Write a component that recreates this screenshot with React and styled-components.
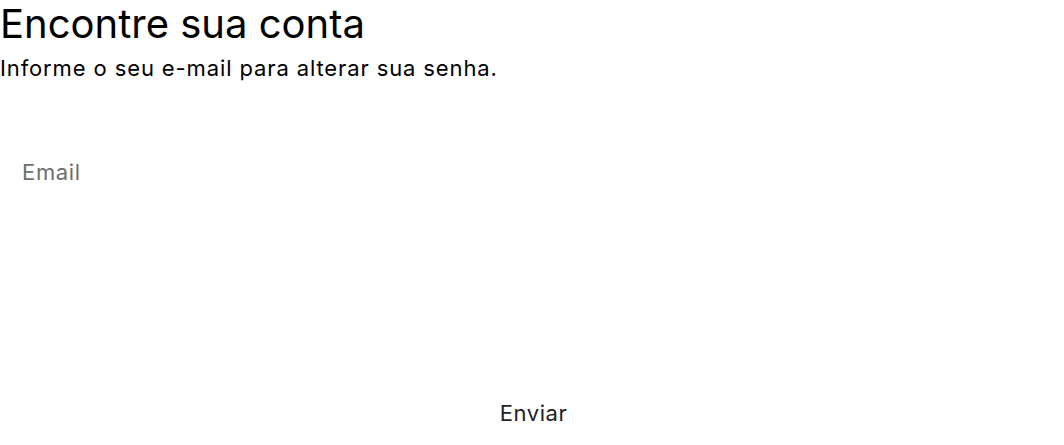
import styled, { createGlobalStyle } from 'styled-components';

const Global = createGlobalStyle`
  body {
    margin: 0;
    background: #fff;
    font-family: Inter, "Noto Sans", sans-serif;
  }
`

const Page = styled.div`
  width: 1064px;
  height: 445px;
  display: flex;
  flex-direction: column;
`

const Title = styled.h1`
  margin: 0;
  font-size: 40px;
  font-weight: 400;
  line-height: 47px;
  color: #000;
`

const Subtitle = styled.p`
  margin: 9px 0 0;
  font-size: 22px;
  line-height: 24px;
  letter-spacing: 0.04em;
  color: #000;
`

const Form = styled.form`
  flex: 1;
  display: flex;
  flex-direction: column;
  padding-top: 77px;
`

const Input = styled.input`
  border: none;
  outline: none;
  background: transparent;
  padding: 0 22px;
  height: 30px;
  font-family: inherit;
  font-size: 22px;
  letter-spacing: 0.03em;
  color: #222;
  &::placeholder {
    color: #6e6e6e;
  }
`

const Button = styled.button`
  margin-top: auto;
  margin-bottom: 19px;
  align-self: center;
  border: none;
  background: transparent;
  font-family: inherit;
  font-size: 22px;
  letter-spacing: 0.025em;
  color: #222;
  cursor: pointer;
  padding: 0 0 0 3px;
`

export default function App() {
  return (
    <>
      <Global />
      <Page>
        <Title>Encontre sua conta</Title>
        <Subtitle>Informe o seu e-mail para alterar sua senha.</Subtitle>
        <Form onSubmit={e => e.preventDefault()}>
          <Input type="email" placeholder="Email" />
          <Button type="submit">Enviar</Button>
        </Form>
      </Page>
    </>
  )
}
